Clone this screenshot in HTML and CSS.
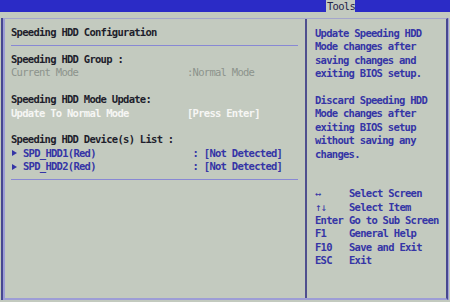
FILE: index.html
```html
<!DOCTYPE html>
<html>
<head>
<meta charset="utf-8">
<link rel="stylesheet" href="styles.css">
</head>
<body>
<div class="topbar">
  <div class="tab">Tools</div>
</div>
<div class="frame">
  <div class="inner">
    <div class="left">
      <div class="line title">Speeding HDD Configuration</div>
      <div class="rule"></div>
      <div class="line">Speeding HDD Group :</div>
      <div class="row gray"><span class="label">Current Mode</span><span>:Normal Mode</span></div>
      <div class="line blank"></div>
      <div class="line">Speeding HDD Mode Update:</div>
      <div class="row white"><span class="label">Update To Normal Mode</span><span>[Press Enter]</span></div>
      <div class="line blank"></div>
      <div class="line">Speeding HDD Device(s) List :</div>
      <div class="row blue"><span class="label"><svg class="tri" width="5" height="6" viewBox="0 0 5 6"><path d="M0 0 L5 3 L0 6 Z" fill="#3535a6"/></svg>SPD_HDD1(Red)</span><span class="pre"> : [Not Detected]</span></div>
      <div class="row blue"><span class="label"><svg class="tri" width="5" height="6" viewBox="0 0 5 6"><path d="M0 0 L5 3 L0 6 Z" fill="#3535a6"/></svg>SPD_HDD2(Red)</span><span class="pre"> : [Not Detected]</span></div>
      <div class="rule second"></div>
    </div>
    <div class="right">
      <div class="line">Update Speeding HDD</div>
      <div class="line">Mode changes after</div>
      <div class="line">saving changes and</div>
      <div class="line">exiting BIOS setup.</div>
      <div class="line blank"></div>
      <div class="line">Discard Speeding HDD</div>
      <div class="line">Mode changes after</div>
      <div class="line">exiting BIOS setup</div>
      <div class="line">without saving any</div>
      <div class="line">changes.</div>
      <div class="keys">
        <div class="key"><span class="k arrow">↔</span><span>Select Screen</span></div>
        <div class="key"><span class="k arrow">↑↓</span><span>Select Item</span></div>
        <div class="key"><span class="k">Enter</span><span>Go to Sub Screen</span></div>
        <div class="key"><span class="k">F1</span><span>General Help</span></div>
        <div class="key"><span class="k">F10</span><span>Save and Exit</span></div>
        <div class="key"><span class="k">ESC</span><span>Exit</span></div>
      </div>
    </div>
  </div>
</div>
</body>
</html>
```
FILE: styles.css
```css
html, body {
  margin: 0;
  padding: 0;
}
body {
  width: 450px;
  height: 302px;
  background: #c3cabf;
  font-family: "DejaVu Sans Mono", "Liberation Mono", monospace;
  font-size: 10.5px;
  letter-spacing: -0.72px;
  font-weight: bold;
  overflow: hidden;
}
.topbar {
  height: 12px;
  background: #2b2bc6;
  display: flex;
}
.tab {
  margin-left: 326px;
  width: 29px;
  height: 12px;
  background: #c3cabf;
  color: #23234a;
  line-height: 12px;
  font-weight: normal;
  padding-left: 1px;
  box-sizing: border-box;
}
.frame {
  margin: 6px 1px 0 1px;
  height: 282px;
  box-sizing: border-box;
  border-left: 2px solid #474790;
  border-right: 1px solid #9d9dd6;
}
.inner {
  height: 100%;
  box-sizing: border-box;
  border-left: 2px solid #9d9dd6;
  border-top: 1px solid #a4a6cc;
  border-bottom: 2px solid #9d9dd6;
  border-right: 2px solid #474790;
  display: flex;
}
.left {
  width: 302px;
  flex: none;
  box-sizing: border-box;
  padding: 7px 7px 0 6px;
  color: #1e1e2c;
  border-right: 2px solid #4f4f8e;
}
.line, .row {
  height: 13.4px;
  line-height: 13.4px;
  white-space: pre;
}
.row {
  display: flex;
}
.label {
  width: 176px;
  flex: none;
  display: flex;
  align-items: center;
}
.pre {
  white-space: pre;
}
.tri {
  margin: 0 6px 0 1px;
}
.gray {
  color: #8c938c;
  font-weight: normal;
}
.white {
  color: #f6f6f4;
}
.blue {
  color: #3535a6;
}
.rule {
  height: 1px;
  background: #8888d4;
  margin: 5.6px 0 7px 0;
}
.rule.second {
  margin: 5.4px 0 0 0;
}
.right {
  flex: 1;
  padding: 8px 0 0 8px;
  color: #3535a6;
}
.keys {
  margin-top: 26.4px;
}
.key {
  display: flex;
  height: 13.4px;
  line-height: 13.4px;
  white-space: pre;
}
.k {
  width: 34px;
  flex: none;
}
.arrow {
  font-weight: normal;
}
```
